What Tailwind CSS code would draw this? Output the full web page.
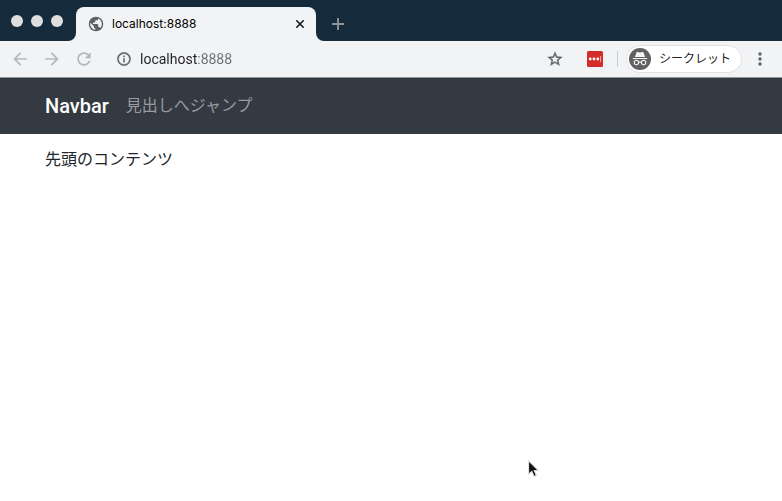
<!DOCTYPE html>
<html lang="ja">
<head>
<meta charset="utf-8">
<meta name="viewport" content="width=device-width, initial-scale=1">
<title>localhost:8888</title>
<script src="https://cdn.jsdelivr.net/npm/@tailwindcss/browser@4"></script>
</head>
<body class="flex min-h-screen flex-col bg-white font-['Roboto','Noto_Sans_CJK_JP',sans-serif] text-[#212529]">
<header>
  <div class="flex h-[41px] items-end bg-[#152b3c]">
    <div class="flex h-full w-[76px] items-center gap-2 pl-[11px]">
      <button aria-label="閉じる" class="size-3 rounded-full bg-[#dedede]"></button>
      <button aria-label="最小化" class="size-3 rounded-full bg-[#dedede]"></button>
      <button aria-label="最大化" class="size-3 rounded-full bg-[#dedede]"></button>
    </div>
    <div class="relative flex h-[34px] w-60 items-center rounded-t-lg bg-[#f2f3f5] pr-2 pl-3">
      <svg class="absolute bottom-0 -left-2 size-2" viewBox="0 0 8 8" fill="#f2f3f5" aria-hidden="true"><path d="M8 0v8H0a8 8 0 0 0 8-8z"/></svg>
      <svg class="absolute -right-2 bottom-0 size-2" viewBox="0 0 8 8" fill="#f2f3f5" aria-hidden="true"><path d="M0 0v8h8a8 8 0 0 1-8-8z"/></svg>
      <svg class="size-4 shrink-0" viewBox="1 1 22 22" aria-hidden="true"><circle cx="12" cy="12" r="10" fill="#5f6165"/><path fill="#f2f3f5" d="M11 19.93c-3.95-.49-7-3.85-7-7.93 0-.62.08-1.21.21-1.79L9 15v1c0 1.1.9 2 2 2v1.93zm6.9-2.54c-.26-.81-1-1.39-1.9-1.39h-1v-3c0-.55-.45-1-1-1H8v-2h2c.55 0 1-.45 1-1V7h2c1.1 0 2-.9 2-2v-.41c2.93 1.19 5 4.06 5 7.41 0 2.08-.8 3.97-2.1 5.39z"/></svg>
      <span class="ml-2 flex-1 font-['Inter',sans-serif] text-xs text-black">localhost:8888</span>
      <button aria-label="タブを閉じる" class="flex size-4 items-center justify-center"><svg class="size-2" viewBox="0 0 8 8" stroke="#111" stroke-width="1.5" aria-hidden="true"><path d="M.3.3l7.4 7.4M7.7.3L.3 7.7"/></svg></button>
    </div>
    <button aria-label="新しいタブ" class="ml-3.5 flex h-[34px] w-4 items-center justify-center"><svg class="size-3" viewBox="0 0 12 12" stroke="#8f9496" stroke-width="1.9" aria-hidden="true"><path d="M6 0v12M0 6h12"/></svg></button>
  </div>
  <div class="flex h-[37px] items-center border-b border-[#929599] bg-[#f2f3f5] pr-3.5">
    <nav aria-label="ブラウザ" class="flex gap-3 pl-2.5">
      <button aria-label="戻る"><svg class="size-5" viewBox="0 0 24 24" fill="#b4b6b8"><path d="M20 11H7.83l5.59-5.59L12 4l-8 8 8 8 1.41-1.41L7.83 13H20v-2z"/></svg></button>
      <button aria-label="進む"><svg class="size-5" viewBox="0 0 24 24" fill="#b4b6b8"><path d="M12 4l-1.41 1.41L16.17 11H4v2h12.17l-5.58 5.59L12 20l8-8z"/></svg></button>
      <button aria-label="再読み込み"><svg class="size-5" viewBox="0 0 24 24" fill="#b4b6b8"><path d="M17.65 6.35C16.2 4.9 14.21 4 12 4c-4.42 0-7.99 3.58-7.99 8s3.57 8 7.99 8c3.73 0 6.84-2.55 7.73-6h-2.08c-.82 2.33-3.04 4-5.65 4-3.31 0-6-2.69-6-6s2.69-6 6-6c1.66 0 3.14.69 4.22 1.78L13 11h7V4l-2.35 2.35z"/></svg></button>
    </nav>
    <button aria-label="サイト情報" class="ml-[22px]"><svg class="size-4" viewBox="0 0 24 24" fill="#5f6368" stroke="#5f6368" stroke-width=".4"><path d="M11 7h2v2h-2zm0 4h2v6h-2zm1-9C6.48 2 2 6.48 2 12s4.48 10 10 10 10-4.48 10-10S17.52 2 12 2zm0 18c-4.41 0-8-3.59-8-8s3.59-8 8-8 8 3.59 8 8-3.59 8-8 8z"/></svg></button>
    <input aria-label="アドレス" value="localhost:8888" class="ml-2 min-w-0 flex-1 bg-linear-to-r from-[#202124] from-[57px] to-[#6b6e72] to-[57px] bg-clip-text text-sm leading-5 text-transparent outline-none">
    <button aria-label="ブックマーク"><svg class="size-4" viewBox="1 1 22 22" fill="#5f6368" stroke="#5f6368" stroke-width=".5"><path d="M22 9.24l-7.19-.62L12 2 9.19 8.63 2 9.24l5.46 4.73L5.82 21 12 17.27 18.18 21l-1.63-7.03L22 9.24zM12 15.4l-3.76 2.27 1-4.28-3.32-2.88 4.38-.38L12 6.1l1.71 4.04 4.38.38-3.32 2.88 1 4.28L12 15.4z"/></svg></button>
    <button aria-label="拡張機能" class="ml-6"><svg class="size-4" viewBox="0 0 16 16"><rect width="16" height="16" rx="1.5" fill="#d42c27"/><g fill="#fff"><circle cx="3.2" cy="8" r="1.4"/><circle cx="7" cy="8" r="1.4"/><circle cx="10.8" cy="8" r="1.4"/><path d="M13.3 5h.8v6h-.8z" opacity=".75"/></g></svg></button>
    <span class="ml-3.5 h-4 w-px bg-[#c9cbce]"></span>
    <button class="ml-2 flex h-7 items-center gap-2 rounded-full border border-[#dfe1e4] bg-white pr-2.5 pl-0.5 text-xs text-[#202124]">
      <svg class="size-[22px]" viewBox="0 0 22 22" aria-hidden="true"><circle cx="11" cy="11" r="11" fill="#5f6163"/><path fill="#f4f4f4" d="M7.3 4.7q.4-1 1.4-.7l2.3.5 2.3-.5q1-.3 1.4.7L16 9H6zM3.8 10h14.4v1H3.8z"/><g fill="none" stroke="#f4f4f4" stroke-width="1.1"><circle cx="7.4" cy="14.5" r="2.2"/><circle cx="14.6" cy="14.5" r="2.2"/><path d="M9.6 14.3q1.4-.7 2.8 0"/></g></svg>
      <span>シークレット</span>
    </button>
    <button aria-label="メニュー" class="ml-2.5"><svg class="size-4" viewBox="0 0 16 16" fill="#5f6368"><circle cx="8" cy="3" r="1.7"/><circle cx="8" cy="8" r="1.7"/><circle cx="8" cy="13" r="1.7"/></svg></button>
  </div>
</header>
<nav class="flex h-14 items-center gap-[17px] bg-[#343a42] px-[45px]">
  <a href="#" class="text-xl font-medium text-white">Navbar</a>
  <a href="#heading" class="text-base text-[#999ca0]">見出しへジャンプ</a>
</nav>
<main class="flex-1 px-[45px] pt-3.5">
  <p class="text-base leading-6">先頭のコンテンツ</p>
</main>
<svg class="pointer-events-none absolute top-[459px] left-[526px] h-5 w-4" viewBox="0 0 16 20" aria-hidden="true"><path d="M2.5 1.5v14l3.3-3 2.2 5 2.5-1-2.2-4.8h4.2z" fill="#111" stroke="#e2e2e2" stroke-width="1.2"/></svg>
</body>
</html>
